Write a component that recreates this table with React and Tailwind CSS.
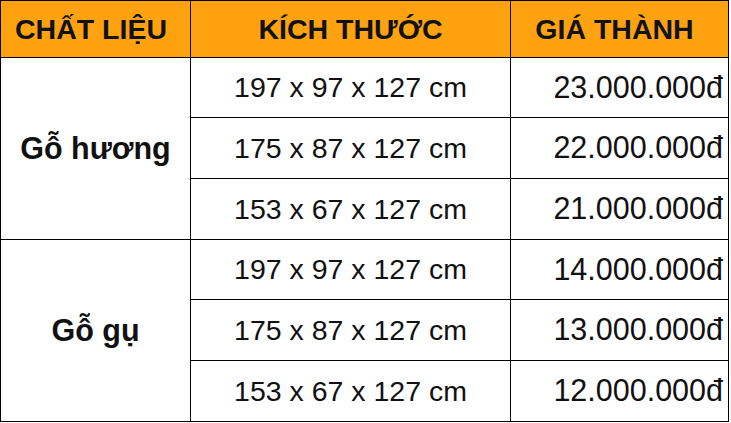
import React from "react";

const rows = [
  { material: "Gỗ hương", items: [["197 x 97 x 127 cm", "23.000.000đ"], ["175 x 87 x 127 cm", "22.000.000đ"], ["153 x 67 x 127 cm", "21.000.000đ"]] },
  { material: "Gỗ gụ", items: [["197 x 97 x 127 cm", "14.000.000đ"], ["175 x 87 x 127 cm", "13.000.000đ"], ["153 x 67 x 127 cm", "12.000.000đ"]] },
];

export default function App() {
  const rowH = ["h-[59px]", "h-[60px]", "h-[60px]"];
  return (
    <div className="w-[731px] h-[423px] bg-white" style={{ fontFamily: '"Liberation Sans", Arial, sans-serif' }}>
      <div className="grid grid-cols-[189px_319px_217px] gap-px p-px bg-black w-[729px] text-[#111]">
        <div className="h-[56px] bg-[#ffa210] flex items-center justify-center font-bold text-[28.5px] pt-px pr-[9px]">CHẤT LIỆU</div>
        <div className="h-[56px] bg-[#ffa210] flex items-center justify-center font-bold text-[28.5px] pt-px">KÍCH THƯỚC</div>
        <div className="h-[56px] bg-[#ffa210] flex items-center justify-center font-bold text-[28.5px] pt-px pr-[10px]">GIÁ THÀNH</div>
        {rows.map((g, gi) => (
          <React.Fragment key={gi}>
            <div className="row-span-3 bg-white flex items-center justify-center font-bold text-[30.5px]">{g.material}</div>
            {g.items.map((it, i) => (
              <React.Fragment key={i}>
                <div className={`${rowH[i]} bg-white flex items-center justify-center text-[28.5px] col-start-2`}>{it[0]}</div>
                <div className={`${rowH[i]} bg-white flex items-center justify-end pr-[5px] text-[30.5px]`}>{it[1]}</div>
              </React.Fragment>
            ))}
          </React.Fragment>
        ))}
      </div>
    </div>
  );
}
